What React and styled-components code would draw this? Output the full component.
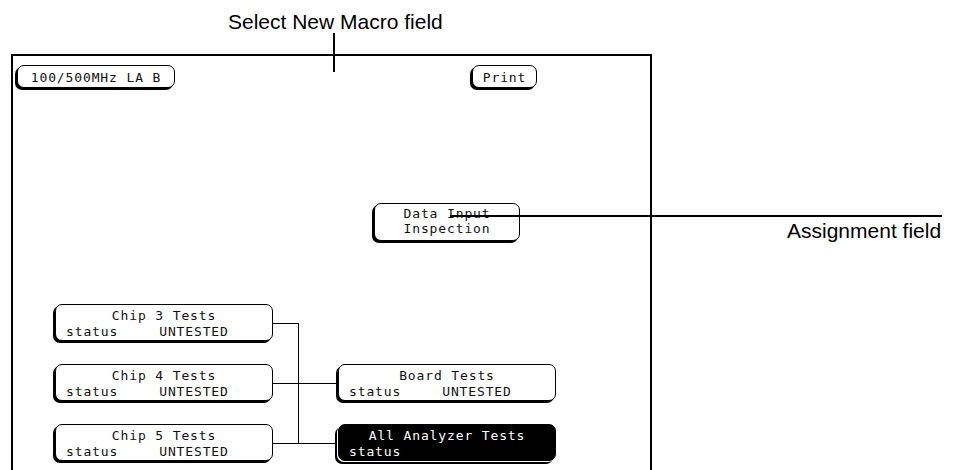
import styled, { createGlobalStyle } from 'styled-components';

const GlobalStyle = createGlobalStyle`
  html, body {
    margin: 0;
    padding: 0;
    background: #fff;
  }
  body {
    font-family: "Liberation Sans", Arial, sans-serif;
    color: #000;
  }
`;

const Page = styled.div`
  position: relative;
  width: 954px;
  height: 470px;
  overflow: hidden;
  background: #fff;
`;

const Caption = styled.div`
  padding: 10px 0 0 228px;
  font-size: 21px;
  line-height: 24px;
  height: 24px;
`;

const Screen = styled.div`
  margin: 20px 0 0 11px;
  width: 637px;
  height: 440px;
  border: 2px solid #000;
  font-family: "DejaVu Sans Mono", "Liberation Mono", monospace;
  font-size: 13px;
  letter-spacing: 0.87px;
  color: #111;
`;

const Header = styled.div`
  display: flex;
  padding: 9px 0 0 4px;
  gap: 297px;
`;

const Field = styled.div`
  box-sizing: border-box;
  width: ${p => p.$w}px;
  height: ${p => p.$h}px;
  padding-top: ${p => p.$pt}px;
  border: 1px solid #000;
  border-radius: 7px;
  background: ${p => (p.$inverse ? '#000' : '#fff')};
  color: ${p => (p.$inverse ? '#fff' : '#111')};
  box-shadow: ${p => (p.$inverse ? '-1px 1px 0 #fff, -3px 3px 0 #000' : '-2px 2px 0 #000')};
  line-height: ${p => p.$lh}px;
  white-space: pre;
  overflow: hidden;
`;

const Centered = styled.div`
  text-align: center;
`;

const Middle = styled.div`
  margin: 115px 0 0 361px;
`;

const Tree = styled.div`
  display: grid;
  grid-template-columns: 218px 65px 218px;
  grid-template-rows: repeat(3, 37px);
  row-gap: 23px;
  margin: 63px 0 0 42px;
`;

const Wires = styled.svg`
  grid-column: 2;
  grid-row: 1 / 4;
  width: 65px;
  height: 157px;
  display: block;
`;

const StatusLine = styled.div`
  display: flex;
  padding-left: 10px;
`;

const Value = styled.span`
  margin-left: 41px;
`;

const Callout = styled.div`
  position: absolute;
  background: #000;
  left: ${p => p.$x}px;
  top: ${p => p.$y}px;
  width: ${p => p.$w}px;
  height: ${p => p.$h}px;
`;

const Note = styled.div`
  position: absolute;
  left: 787px;
  top: 219px;
  font-size: 21px;
  line-height: 24px;
`;

const TestBox = ({ title, status, row, col, inverse }) => (
  <Field
    $w={218}
    $h={37}
    $pt={3}
    $lh={16}
    $inverse={inverse}
    style={{ gridRow: row, gridColumn: col }}
  >
    <Centered>{title}</Centered>
    <StatusLine>
      <span>status</span>
      {status && <Value>{status}</Value>}
    </StatusLine>
  </Field>
);

const chips = [
  { title: 'Chip 3 Tests', row: 1 },
  { title: 'Chip 4 Tests', row: 2 },
  { title: 'Chip 5 Tests', row: 3 },
];

export default function App() {
  return (
    <>
      <GlobalStyle />
      <Page>
        <Caption>Select New Macro field</Caption>
        <Screen>
          <Header>
            <Field $w={158} $h={23} $pt={4} $lh={16}>
              <Centered>100/500MHz LA B</Centered>
            </Field>
            <Field $w={65} $h={23} $pt={4} $lh={16}>
              <Centered>Print</Centered>
            </Field>
          </Header>
          <Middle>
            <Field $w={146} $h={38} $pt={2} $lh={15}>
              <Centered>Data Input</Centered>
              <Centered>Inspection</Centered>
            </Field>
          </Middle>
          <Tree>
            {chips.map(c => (
              <TestBox key={c.title} title={c.title} status="UNTESTED" row={c.row} col={1} />
            ))}
            <Wires viewBox="0 0 65 157">
              <g stroke="#000" strokeWidth="1" fill="none" shapeRendering="crispEdges">
                <line x1="0" y1="19.5" x2="25.5" y2="19.5" />
                <line x1="25.5" y1="19.5" x2="25.5" y2="139.5" />
                <line x1="0" y1="79.5" x2="65" y2="79.5" />
                <line x1="0" y1="139.5" x2="65" y2="139.5" />
              </g>
            </Wires>
            <TestBox title="Board Tests" status="UNTESTED" row={2} col={3} />
            <TestBox title="All Analyzer Tests" row={3} col={3} inverse />
          </Tree>
        </Screen>
        <Callout $x={333} $y={33} $w={2} $h={39} />
        <Callout $x={450} $y={215} $w={492} $h={2} />
        <Note>Assignment field</Note>
      </Page>
    </>
  );
}
